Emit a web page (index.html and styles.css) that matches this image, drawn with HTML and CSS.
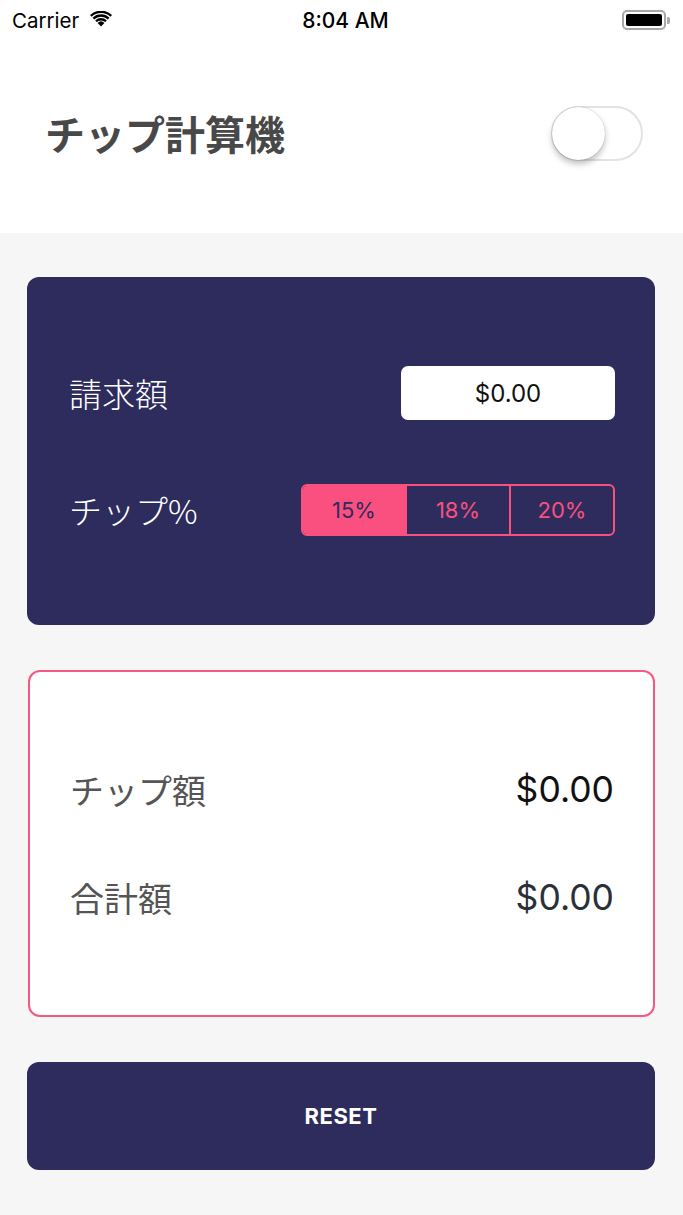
FILE: index.html
```html
<!DOCTYPE html>
<html lang="ja">
<head>
<meta charset="utf-8">
<title>チップ計算機</title>
<link rel="stylesheet" href="styles.css">
</head>
<body>
<div class="app">
  <div class="status">
    <div class="status-left">
      <span class="carrier">Carrier</span>
      <svg class="wifi" width="22" height="16" viewBox="0 0 22 16">
        <path d="M11 15.5 L7.6 11.9 A5 5 0 0 1 14.4 11.9 Z" fill="#000"/>
        <path d="M5.2 9.4 A8.4 8.4 0 0 1 16.8 9.4 L15.2 11.1 A6.2 6.2 0 0 0 6.8 11.1 Z" fill="#000"/>
        <path d="M2.6 6.7 A12.2 12.2 0 0 1 19.4 6.7 L17.8 8.4 A10 10 0 0 0 4.2 8.4 Z" fill="#000"/>
        <path d="M0 4 A16 16 0 0 1 22 4 L20.4 5.7 A13.8 13.8 0 0 0 1.6 5.7 Z" fill="#000"/>
      </svg>
    </div>
    <div class="time">8:04 AM</div>
    <div class="status-right">
      <div class="battery"><div class="battery-fill"></div></div>
      <div class="battery-cap"></div>
    </div>
  </div>

  <header class="header">
    <h1 class="title">チップ計算機</h1>
    <div class="toggle"><div class="knob"></div></div>
  </header>

  <main class="main">
    <section class="card card-input">
      <div class="row">
        <span class="label">請求額</span>
        <div class="bill-input">$0.00</div>
      </div>
      <div class="row">
        <span class="label">チップ%</span>
        <div class="segments">
          <div class="seg seg-active">15%</div>
          <div class="seg">18%</div>
          <div class="seg">20%</div>
        </div>
      </div>
    </section>

    <section class="card card-result">
      <div class="row result-row">
        <span class="label label-dark">チップ額</span>
        <span class="amount">$0.00</span>
      </div>
      <div class="row result-row">
        <span class="label label-dark">合計額</span>
        <span class="amount amount-grey">$0.00</span>
      </div>
    </section>

    <button class="reset">RESET</button>
  </main>
</div>
</body>
</html>
```

FILE: styles.css
```css
* { box-sizing: border-box; }

html, body {
  margin: 0;
  padding: 0;
  background: #f6f6f6;
}

body {
  font-family: Inter, "Noto Sans CJK JP", sans-serif;
  width: 683px;
  min-height: 1215px;
}

.app {
  display: flex;
  flex-direction: column;
  min-height: 1215px;
}

.status {
  height: 40px;
  background: #fff;
  display: flex;
  align-items: center;
  justify-content: space-between;
  padding: 0 12px 0 12px;
}

.status-left {
  display: flex;
  align-items: center;
  gap: 11px;
  width: 140px;
}

.carrier {
  font-family: Inter, sans-serif;
  font-size: 20.5px;
  color: #000;
}

.wifi { margin-top: -2px; }

.time {
  font-family: Inter, sans-serif;
  font-weight: 500;
  font-size: 21px;
  color: #000;
  padding-left: 8px;
}

.status-right {
  width: 140px;
  display: flex;
  justify-content: flex-end;
  align-items: center;
}

.battery {
  width: 44px;
  height: 20px;
  border: 2px solid #a8a8a8;
  border-radius: 5px;
  padding: 2px;
}

.battery-fill {
  width: 100%;
  height: 100%;
  background: #000;
  border-radius: 2px;
}

.battery-cap {
  width: 3px;
  height: 7px;
  background: #a8a8a8;
  border-radius: 0 2px 2px 0;
  margin-left: 1px;
  margin-right: 1px;
}

.header {
  height: 193px;
  background: #fff;
  display: flex;
  align-items: center;
  justify-content: space-between;
  padding: 0 40px 0 45px;
}

.title {
  margin: 0;
  font-family: "Noto Sans CJK JP", sans-serif;
  font-weight: 700;
  font-size: 40px;
  color: #484848;
  margin-top: -8px;
}

.toggle {
  width: 92px;
  height: 55px;
  border-radius: 28px;
  border: 2px solid #e3e3e3;
  background: #fff;
  display: flex;
  align-items: center;
  margin-top: -6px;
}

.knob {
  width: 53px;
  height: 53px;
  border-radius: 50%;
  background: #fff;
  margin-left: -1px;
  box-shadow: 0 4px 6px rgba(0,0,0,0.25), 0 0 1px rgba(0,0,0,0.3);
}

.main {
  flex: 1;
  background: #f6f6f6;
  padding: 44px 28px 45px 27px;
  display: flex;
  flex-direction: column;
  gap: 45px;
}

.card {
  border-radius: 12px;
  display: flex;
  flex-direction: column;
  justify-content: center;
}

.card-input {
  height: 348px;
  background: #2d2c5d;
  padding: 0 40px 0 42px;
  gap: 64px;
}

.row {
  display: flex;
  align-items: center;
  justify-content: space-between;
}

.label {
  font-family: "Noto Sans CJK JP", sans-serif;
  font-size: 33px;
  font-weight: 300;
  color: #fff;
  line-height: 44px;
}

.bill-input {
  width: 214px;
  height: 54px;
  background: #fff;
  border-radius: 7px;
  display: flex;
  align-items: center;
  justify-content: center;
  font-family: Inter, sans-serif;
  font-size: 24px;
  color: #111;
}

.segments {
  width: 314px;
  height: 52px;
  display: flex;
  border: 2px solid #fa5080;
  border-radius: 6px;
  overflow: hidden;
}

.seg {
  flex: 1;
  display: flex;
  align-items: center;
  justify-content: center;
  font-family: Inter, sans-serif;
  font-size: 22px;
  color: #fa5080;
}

.seg + .seg { border-left: 2px solid #fa5080; }

.seg-active {
  background: #fa5080;
  color: #2d2c5d;
}

.card-result {
  height: 347px;
  background: #fff;
  border: 2px solid #f75783;
  margin-left: 1px;
  padding: 0 39px 0 40px;
  gap: 64px;
}

.label-dark {
  color: #555;
  font-weight: 400;
  font-size: 34px;
}

.amount {
  font-family: Inter, sans-serif;
  font-size: 35.5px;
  font-weight: 400;
  color: #111;
}

.amount-grey { color: #2b3038; }

.reset {
  height: 108px;
  width: 100%;
  border: none;
  border-radius: 12px;
  background: #2d2c5d;
  color: #fff;
  font-family: Inter, sans-serif;
  font-weight: 700;
  font-size: 22px;
  letter-spacing: 0.5px;
  cursor: pointer;
}
```
